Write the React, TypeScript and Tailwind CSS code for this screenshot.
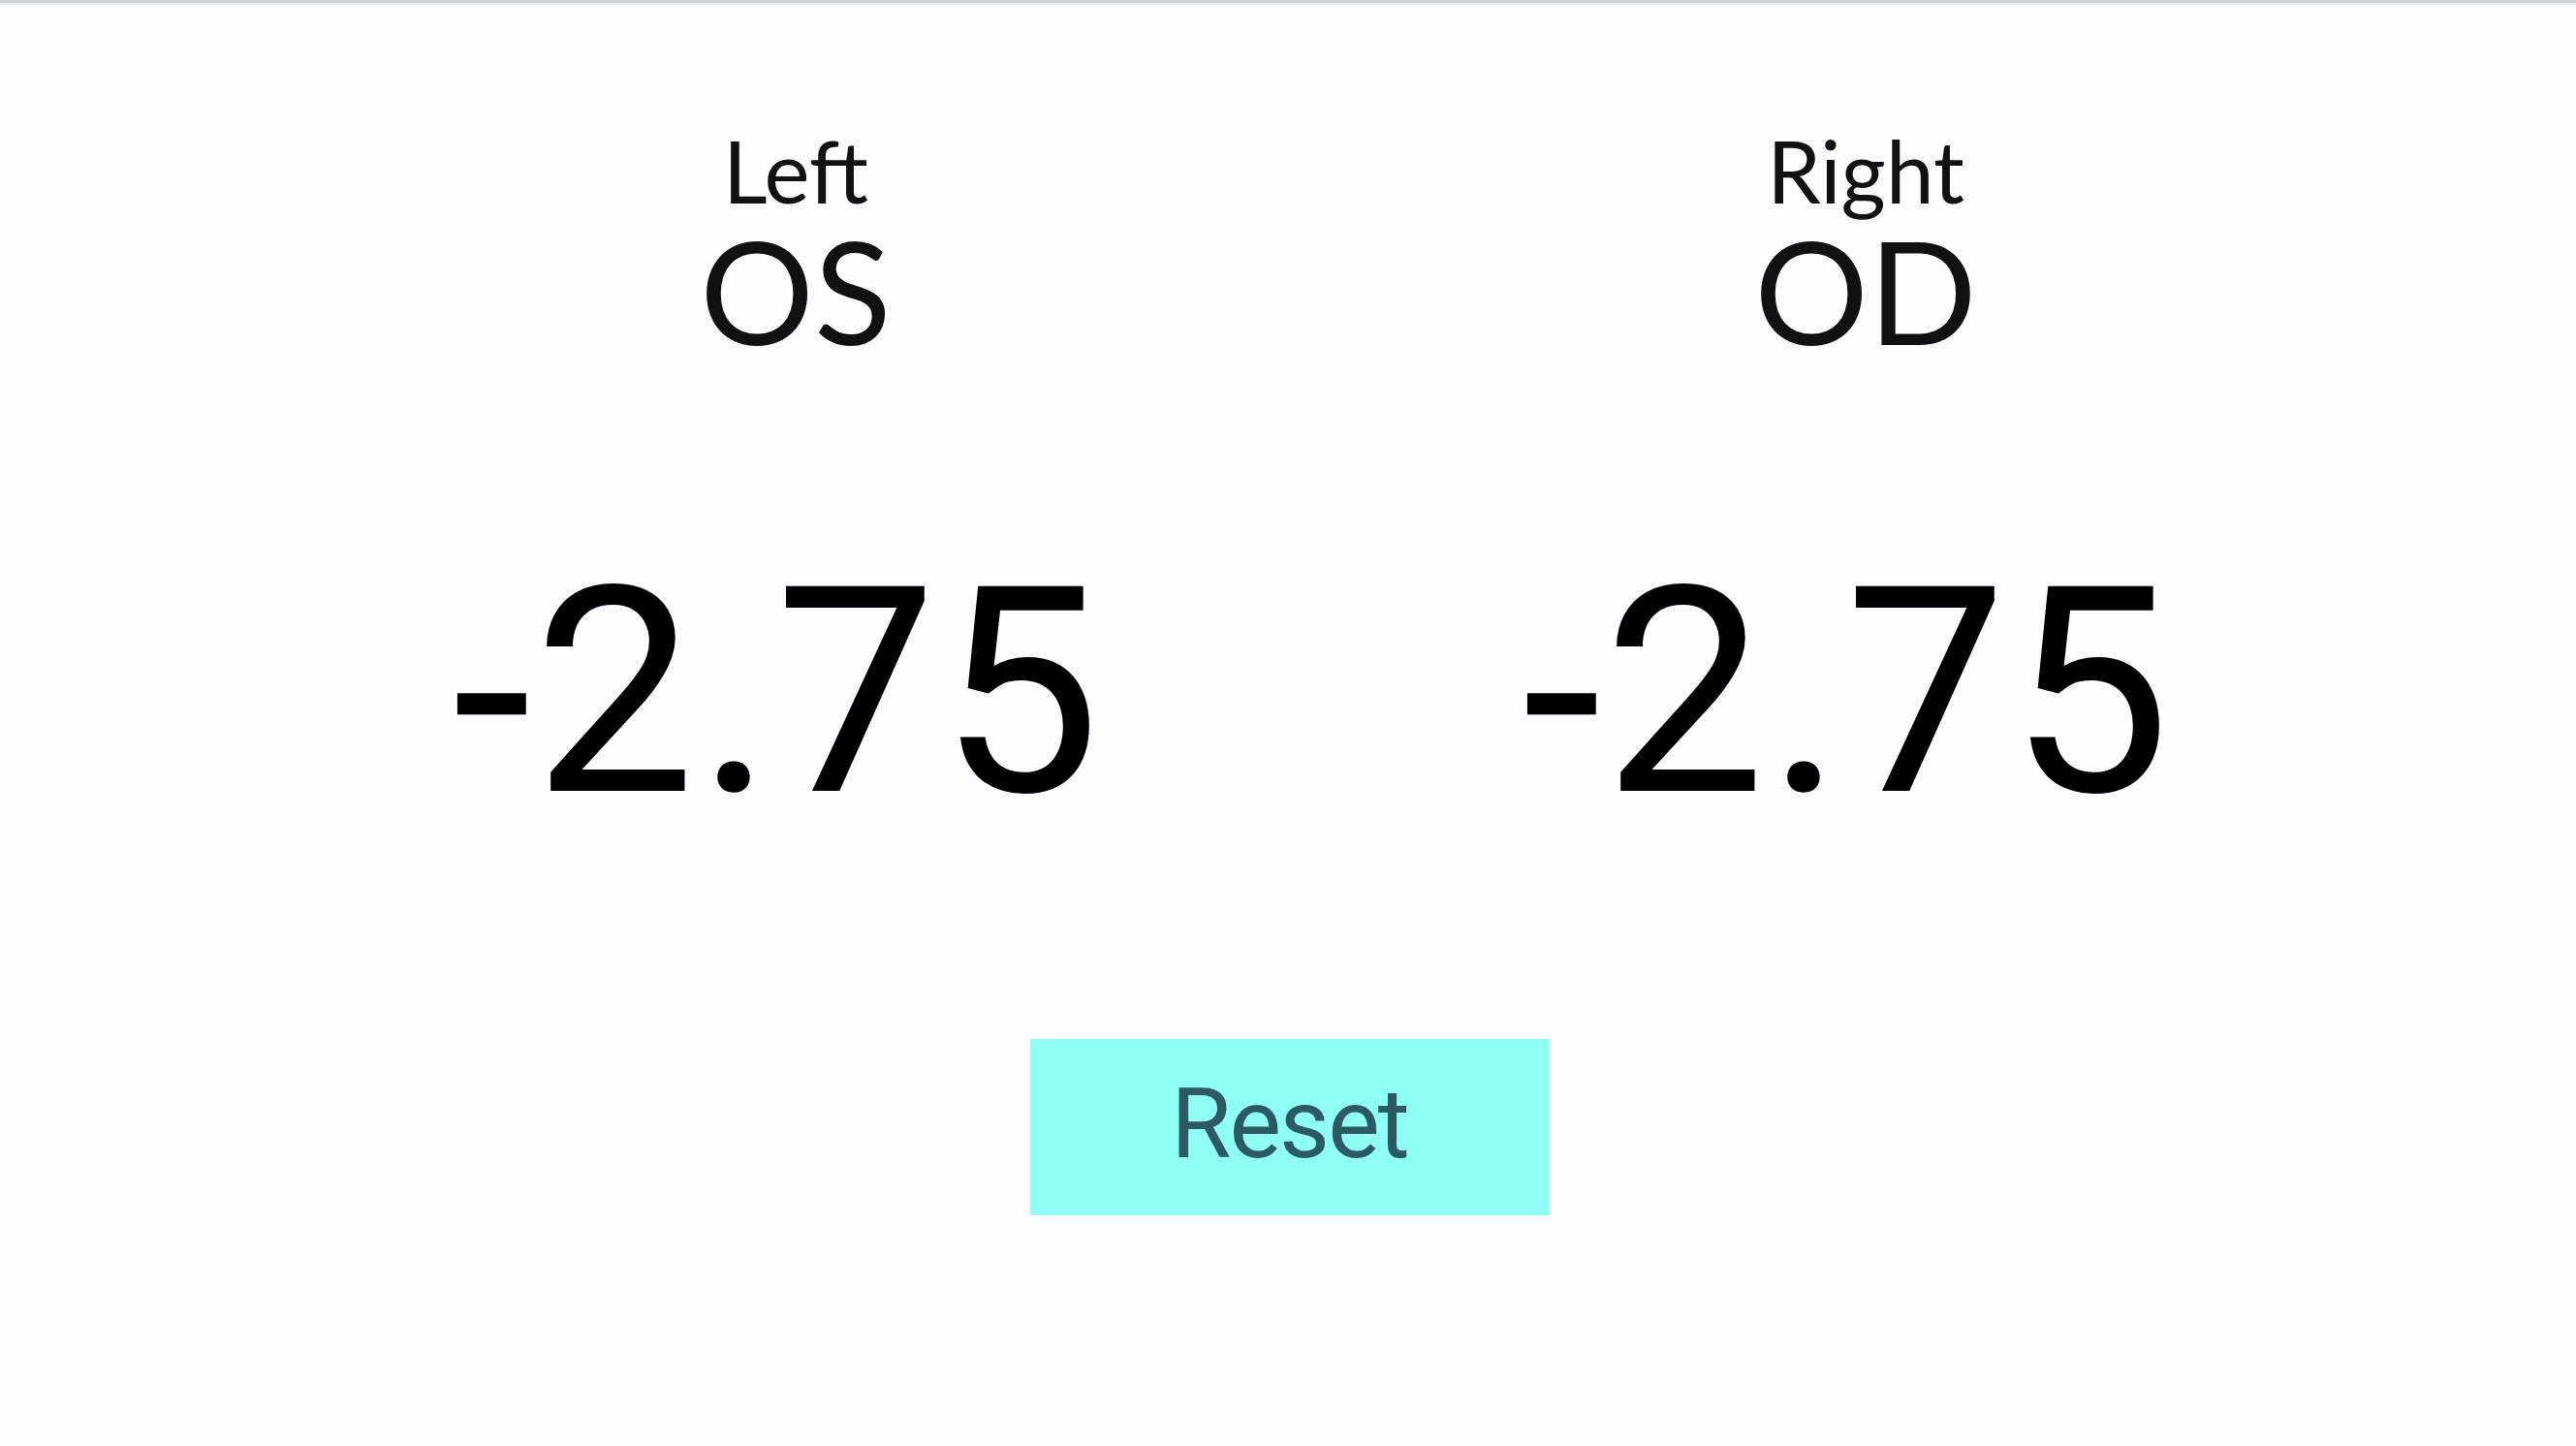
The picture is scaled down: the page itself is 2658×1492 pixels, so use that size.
const eyes = [
  { side: 'Left', code: 'OS', value: '-2.75' },
  { side: 'Right', code: 'OD', value: '-2.75' },
];

function EyeColumn({ side, code, value }: { side: string; code: string; value: string }) {
  return (
    <div className="w-[1104px] flex flex-col items-center">
      <div className="pl-[40px] flex flex-col items-center text-[#111] font-['Lato','Noto_Sans',sans-serif]">
        <div className="text-[89px] leading-[90px]">{side}</div>
        <div className="mt-[3px] text-[147px] leading-[150px]">{code}</div>
      </div>
      <div className="mt-[192px] pl-[2px] text-[297px] leading-none tracking-[2px] font-[450] text-black font-['Roboto','Liberation_Sans',sans-serif]">
        {value}
      </div>
    </div>
  );
}

export default function App() {
  return (
    <div className="min-h-screen bg-[#fcfbfd] border-t-[3px] border-[#c9d2d8]">
      <div className="h-[2px] bg-[#e8eaef]" />
      <div className="flex flex-col items-center pt-[126px]">
        <div className="flex pl-[48px]">
          {eyes.map((e) => (
            <EyeColumn key={e.side} {...e} />
          ))}
        </div>
        <button className="mt-[209px] ml-[3px] w-[536px] h-[182px] pb-[7px] bg-[#8ffff6] flex items-center justify-center">
          <span className="text-[101px] leading-none tracking-[-2px] text-[#2c5a63] font-['Roboto','Liberation_Sans',sans-serif]">
            Reset
          </span>
        </button>
      </div>
    </div>
  );
}
